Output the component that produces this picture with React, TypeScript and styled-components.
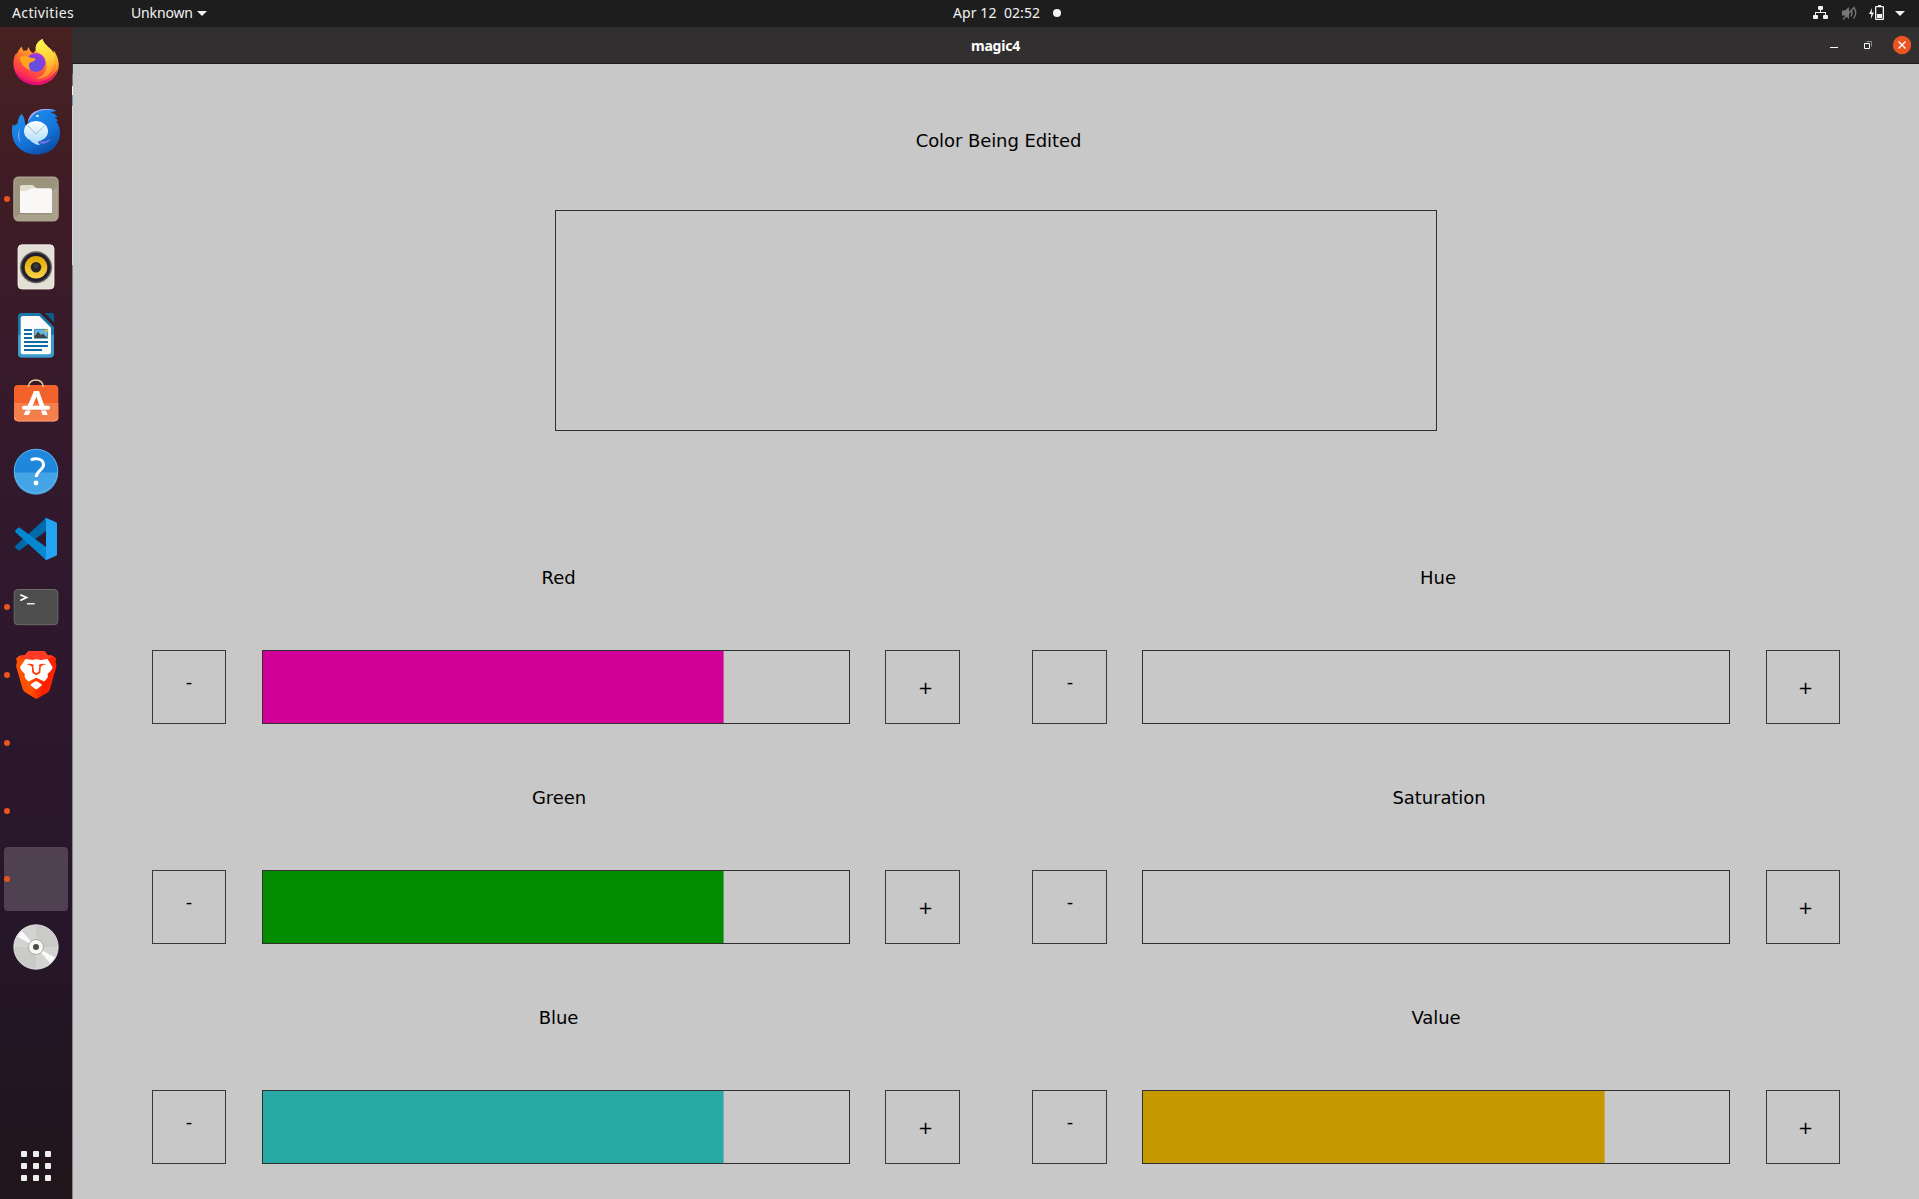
import React from "react";
import styled, { createGlobalStyle } from "styled-components";

const GlobalStyle = createGlobalStyle`
  * { box-sizing: border-box; }
  html, body { margin: 0; padding: 0; overflow: hidden; background: #c8c8c8; }
  svg { display: block; }
`;

const Desktop = styled.div`
  width: 1919px;
  height: 1199px;
  display: flex;
  flex-direction: column;
  font-family: "Noto Sans", "Open Sans", sans-serif;
`;

const TopBar = styled.header`
  flex: none;
  height: 27px;
  background: #1d1d1d;
  color: #f2f2f2;
  display: grid;
  grid-template-columns: 953px 1fr auto;
  font-size: 14px;
  line-height: 26px;
  white-space: pre;
`;

const BarGroup = styled.div`
  display: flex;
  align-items: center;
`;

const MenuGroup = styled(BarGroup)`
  padding-left: 12px;
`;

const BarText = styled.span<{ $w: number; $spacing?: number }>`
  width: ${(p) => p.$w}px;
  height: 27px;
  letter-spacing: ${(p) => p.$spacing ?? 0}px;
`;

const AppMenu = styled.div`
  display: flex;
  align-items: center;
  margin-left: 56px;
`;

const Caret = styled.i`
  width: 0;
  height: 0;
  margin-left: 1px;
  border: 5px solid transparent;
  border-top-color: #f2f2f2;
  border-bottom: 0;
`;

const NoticeDot = styled.i`
  width: 8px;
  height: 8px;
  border-radius: 50%;
  background: #f2f2f2;
  margin: 0 0 1px 12px;
`;

const Tray = styled(BarGroup)`
  padding-right: 14px;
`;

const Body = styled.div`
  flex: 1;
  min-height: 0;
  display: flex;
`;

const Dock = styled.nav`
  flex: none;
  width: 72px;
  padding: 4px 4px 0;
  display: flex;
  flex-direction: column;
  gap: 4px;
  background: linear-gradient(#482121 0%, #401d25 12%, #381a2a 27%, #30182d 45%, #2b172c 62%, #27162a 76%, #231522 88%, #21151b 100%);
`;

const DockItem = styled.div<{ $active?: boolean }>`
  flex: none;
  height: 64px;
  border-radius: 4px;
  display: flex;
  align-items: center;
  background: ${(p) => (p.$active ? "rgba(255,255,255,0.19)" : "transparent")};
`;

const RunningDot = styled.i<{ $on?: boolean }>`
  width: 6px;
  height: 6px;
  margin-right: 2px;
  border-radius: 50%;
  background: ${(p) => (p.$on ? "#e95420" : "transparent")};
`;

const AppsButton = styled.div`
  margin: auto 0 18px 17px;
  display: grid;
  grid-template-columns: repeat(3, 6px);
  gap: 6px;
`;

const AppsDot = styled.i`
  height: 6px;
  border-radius: 1px;
  background: #eeeeec;
`;

const Window = styled.main`
  flex: 1;
  display: flex;
  flex-direction: column;
`;

const TitleBar = styled.div`
  flex: none;
  height: 37px;
  background: #322f30;
  border-bottom: 1px solid #1f1d1d;
  display: grid;
  grid-template-columns: 1fr auto 1fr;
  align-items: center;
  color: #fff;
`;

const WindowTitle = styled.div`
  grid-column: 2;
  font-size: 14px;
  font-weight: 700;
  line-height: 34px;
  padding-top: 2px;
  letter-spacing: -0.2px;
`;

const WindowButtons = styled.div`
  justify-self: end;
  padding-right: 8px;
`;

const Canvas = styled.div`
  flex: 1;
  display: flex;
  flex-direction: column;
  background: #c8c8c8;
  color: #000;
  font-family: "DejaVu Sans", sans-serif;
  font-size: 18px;
  line-height: 24px;
  padding-top: 65px;
  border-style: solid;
  border-width: 0 0 0 1px;
  border-image: linear-gradient(#444 0 11px, #777 11px 23px, #f4f4f4 23px 32px, #5c9cc8 32px 43px, #d8d8d8 43px 202px, #8d838b 202px) 1;
`;

const Label = styled.div<{ $shift?: number }>`
  height: 24px;
  text-align: center;
  letter-spacing: -0.08px;
  padding-left: ${(p) => p.$shift ?? 0}px;
`;

const Preview = styled.div`
  width: 882px;
  height: 221px;
  margin: 57px 0 135px 482px;
  border: 1px solid #303030;
`;

const Columns = styled.div`
  display: grid;
  grid-template-columns: 808px 808px;
  gap: 72px;
  padding-left: 79px;
`;

const Column = styled.section`
  display: flex;
  flex-direction: column;
  gap: 62px;
`;

const Channel = styled.div`
  display: flex;
  flex-direction: column;
  gap: 60px;
`;

const ControlRow = styled.div<{ $right: boolean }>`
  display: grid;
  grid-template-columns: ${(p) => (p.$right ? "75px 35px 588px 36px 74px" : "74px 36px 588px 35px 75px")};
  height: 74px;
`;

const Step = styled.button<{ $plus?: boolean; $nudge: number }>`
  grid-column: ${(p) => (p.$plus ? 5 : 1)};
  display: flex;
  justify-content: center;
  align-items: center;
  border: 1px solid #383838;
  background: none;
  font: inherit;
  color: inherit;
  padding: ${(p) => (p.$plus ? "2px 0 0" : "0 0 10px")};
  padding-left: ${(p) => p.$nudge}px;
`;

const Track = styled.div`
  grid-column: 3;
  border: 1px solid #303030;
`;

const Fill = styled.div<{ $color: string }>`
  height: 100%;
  background: ${(p) => p.$color};
  border-right: 1px solid rgba(200, 200, 200, 0.4);
`;

const Firefox = () => (
  <svg width="48" height="48" viewBox="0 1 48 48">
    <defs>
      <linearGradient id="ffBody" x1="0.8" y1="0" x2="0.3" y2="1">
        <stop offset="0" stopColor="#fff44f" /><stop offset=".3" stopColor="#ffb52b" />
        <stop offset=".58" stopColor="#ff6a2c" /><stop offset=".82" stopColor="#ff3650" /><stop offset="1" stopColor="#e1087a" />
      </linearGradient>
      <linearGradient id="ffTail" x1="0.4" y1="0" x2="0.6" y2="1">
        <stop offset="0" stopColor="#fff44f" /><stop offset=".5" stopColor="#ffd43a" /><stop offset="1" stopColor="#ff8a2a" />
      </linearGradient>
      <radialGradient id="ffGlobe" cx=".45" cy=".7" r=".8">
        <stop offset="0" stopColor="#5b56e0" /><stop offset=".55" stopColor="#8040df" /><stop offset="1" stopColor="#b833e1" />
      </radialGradient>
    </defs>
    <path d="M9.800 8.500c.2 1.800 1 3.300 2 4.400 1-.3 2.200-.4 3.300-.2.2-1.500.9-2.900 1.800-3.700 0 3 2 5 4.300 6.200L24 12c-.8-5 2-9 6.700-11 .6 5 6 7.600 9 11.200.8 1 1.200 1.800 1.700 3l.3-2.700c3.500 4.500 5.500 11 5 16C45.500 39.500 35.500 47 24.500 47 11.500 47 1.400 37.500 1.400 25c0-4 1.300-7.800 3.100-10.400L4.800 17C5.600 13.500 7.300 10.500 9.800 8.500z" fill="url(#ffBody)" />
    <path d="M2 31c4 9 12.500 13 21.500 13S41 39 45.500 31C43 41.500 34 47 24.500 47S5 42 2 31z" fill="#e1097b" opacity=".8" />
    <path d="M24 13c-1.500-5 1.500-10 6.700-12 .6 5 6 7.600 9 11.200 4.500 6 4.500 14-1 21.800-3.500 5-9 7-15 6.500 8-2 12.500-8 10.500-16.500C33 18 28 15 24 13z" fill="url(#ffTail)" />
    <circle cx="23.800" cy="24.500" r="9.600" fill="url(#ffGlobe)" />
    <path d="M7.500 19.500c4-3 8-1.500 10.500.1 2 .8 5 .3 5.500 1.300.2 1.600-2.500 2.500-4.500 3.200-3 1.400-2.500 5.500-.3 8.100C13 31 9 26 7.500 19.500z" fill="#ffa51f" />
  </svg>
);

const Thunderbird = () => (
  <svg width="48" height="48" viewBox="0 0 48 48">
    <defs>
      <linearGradient id="tbBody" x1=".2" y1="0" x2=".8" y2="1">
        <stop offset="0" stopColor="#2192ef" /><stop offset=".6" stopColor="#1373d9" /><stop offset="1" stopColor="#0b479c" />
      </linearGradient>
      <linearGradient id="tbMail" x1="0" y1="0" x2="0" y2="1">
        <stop offset="0" stopColor="#fff" /><stop offset="1" stopColor="#b4dffb" />
      </linearGradient>
    </defs>
    <path d="M9.700 7c-3 2.500-4 6.500-4 9.500C3.800 17.500 1.500 20 .9 16.800-.5 22-.2 27.500 1 31.500 3.800 41 13 47.500 24.500 47.500 38 47.500 48 38.500 48 26c0-5-1.500-8.500-4-11.500l2.200-.3c-.6-1.600-2-3-3.700-3.800l3-.7C43 6.500 40 5.800 38.500 5.500l6-1.800C40 1.600 31 1.500 26.500 3.500 21 5.500 17 9 16 15l-1.500 4c-2.500-3-1-8-4.800-12z" fill="url(#tbBody)" />
    <path d="M16 14.800C17 8 21.500 4 26.500 3.200 31 1.500 39 1.800 44.500 3.700c-6-1-14-1-18.500.8C20 7.500 18.500 11.500 16 14.800z" fill="#b7a0f4" />
    <path d="M8 21C5 26 5.500 32 8.500 36 7 31 7 26 8 21z" fill="#879dee" />
    <ellipse cx="24" cy="24.200" rx="12" ry="10.200" fill="url(#tbMail)" />
    <path d="M17 32c3.500 4 7 6 11 6-1.500-1.500-2-2.500-2-4z" fill="#b9def9" />
    <path d="M27 34.500c5 .5 9-1 11.500-3-1 3.500-6 6.500-11 4.700z" fill="#776fe0" />
    <path d="M15.500 18.500l8.700 8.500L32.700 18.500" fill="none" stroke="#a3bccd" strokeWidth="1" />
    <ellipse cx="25.400" cy="8.900" rx="1.500" ry="1" fill="#eaf5ff" />
  </svg>
);

const Files = () => (
  <svg width="48" height="48" viewBox="0 0 48 48">
    <rect x="1.800" y="2" width="44.400" height="44" rx="4.500" fill="#9c937d" stroke="#c6bfad" strokeWidth=".8" />
    <path d="M2.500 43L45.500 12V41.500q0 4-4 4H6.500q-4 0-4-3z" fill="#aaa28d" />
    <path d="M8 12q0-2 2-2h10c2.500 0 2.500 3 5 3v5H8z" fill="#e2dfd0" />
    <path d="M8 15.500c3 .8 5 .8 7.500 0s3-2.300 5.500-2.300h17q2 0 2 2V36.500q0 2-2 2H10q-2 0-2-2z" fill="#f9f8f7" />
    <path d="M8.700 38.700H39" stroke="#756d59" strokeWidth=".8" />
  </svg>
);

const Rhythmbox = () => (
  <svg width="48" height="48" viewBox="0 0 48 48">
    <defs><linearGradient id="rbCone" x1="0" y1="0" x2="0" y2="1"><stop offset="0" stopColor="#dca500" /><stop offset="1" stopColor="#ffd44a" /></linearGradient></defs>
    <rect x="6" y="1.800" width="36" height="44.200" rx="4" fill="#e4dfd5" stroke="#f6f3eb" strokeWidth=".8" />
    <circle cx="24" cy="24.300" r="16" fill="#66635f" />
    <circle cx="24" cy="24.300" r="14.600" fill="#211f2e" />
    <circle cx="24" cy="24.300" r="11.300" fill="url(#rbCone)" />
    <circle cx="24" cy="24.300" r="5.300" fill="#262626" />
    <circle cx="24" cy="23" r="2.500" fill="#393939" />
  </svg>
);

const Writer = () => (
  <svg width="48" height="48" viewBox="0 0 48 48">
    <path d="M9.500 2H28L42 16v26.500q0 4-4 4H10q-4 0-4-4V6q0-4 3.500-4z" fill="#1778a9" />
    <path d="M6 24H42V42.500q0 4-4 4H10q-4 0-4-4z" fill="#3b9bcb" />
    <path d="M11 5H27.300L39 16.700V41q0 2.300-2.300 2.300H11Q8.700 43.300 8.700 41V7.300Q8.700 5 11 5z" fill="#fbfbfb" />
    <path d="M32.700 2H40q2 0 2 2v7.500z" fill="#0e5b8c" />
    <path d="M12 19h8M12 23h8M12 27h8M12 31h24M12 35h24M12 39h18" stroke="#0f6ca5" strokeWidth="2" />
    <path d="M22.400 18.400h13.200v8.800H22.400z" fill="#67b6dc" stroke="#1778a9" strokeWidth=".8" />
    <path d="M33 18.500h2.600v2.800q-2.600 0-2.600-2.800z" fill="#f9c52c" />
    <path d="M22.500 27v-1.500l3.500-5 3 3.500 2-1.500 4.500 4.500z" fill="#444" />
  </svg>
);

const Software = () => (
  <svg width="48" height="48" viewBox="0 0 48 48">
    <rect x="2" y="6" width="44.300" height="36.300" rx="4" fill="#f3622a" />
    <path d="M2 24H46.300V38.300q0 4-4 4H6q-4 0-4-4z" fill="#f57e4d" />
    <path d="M2.500 38q.5 4 4 4H42q3.500 0 4-4" fill="none" stroke="#fbaa83" strokeWidth=".8" />
    <path d="M16.500 8V7.500C16.500-1.200 31.200-1.200 31.200 7.500V8" fill="none" stroke="#f5d4a0" strokeWidth="1.500" />
    <path d="M22 12h5l8.700 24h-5.200L24.500 17.500 16.800 36H11.700z" fill="#fff" />
    <rect x="10" y="26.800" width="28" height="4" rx="2" fill="#fff" />
    <path d="M13 31.300H35" stroke="#c9754d" strokeWidth=".6" />
  </svg>
);

const Help = () => (
  <svg width="48" height="48" viewBox="0 0 48 48">
    <circle cx="24" cy="24" r="22.200" fill="#1f87dc" />
    <path d="M1.800 25.500H46.200A22.200 22.200 0 0 1 1.800 25.500z" fill="#44a4e6" />
    <circle cx="24" cy="24" r="21.700" fill="none" stroke="#6db8ec" strokeWidth=".8" />
    <path d="M18.700 13c4.500-2.200 12.800-1.800 12.800 4.700 0 5.300-7.300 6.300-7.300 12.300" fill="none" stroke="#fff" strokeWidth="3" />
    <circle cx="24" cy="36" r="2.400" fill="#fff" />
  </svg>
);

const VsCode = () => (
  <svg width="48" height="48" viewBox="0 0 48 48">
    <path d="M34 3v13L7.800 35.200q-.8.700-1.600 0l-2.700-2.500q-1-1 0-2z" fill="#0069aa" />
    <path d="M34 45V32L7.800 12.800q-.8-.7-1.600 0l-2.700 2.500q-1 1 0 2z" fill="#0488d0" />
    <path d="M32 4.500L34.500 3l10 4.500q.5.500.5 1.500v30q0 1-.5 1.500l-10 4.500-2.500-1.500q2 1 2-1.500V6q0-2.500-2-1.500z" fill="#23a4f2" />
  </svg>
);

const Terminal = () => (
  <svg width="48" height="48" viewBox="0 0 48 48">
    <rect x="2.200" y="6.500" width="43.600" height="35.200" rx="3.500" fill="#4d4d4d" stroke="#6b6b6b" />
    <path d="M8.300 11.800l6.200 2.700-6.200 2.900" fill="none" stroke="#fff" strokeWidth="1.700" />
    <path d="M15 20.800h7.700" stroke="#fff" strokeWidth="1.300" />
  </svg>
);

const Brave = () => (
  <svg width="48" height="48" viewBox="0 0 48 48">
    <defs><linearGradient id="braveBody"><stop offset=".35" stopColor="#ff5200" /><stop offset=".65" stopColor="#ff2000" /></linearGradient></defs>
    <path d="M16.500 0h16l3.500 4.500c4-1.200 7 1 8.500 3.500l-1 2.500 1 4.500-6.500 23c-.6 2-1.500 2.800-3 4L24.300 48 13.500 41.500c-1.500-1-2.300-2-3-4L4 15l1-4.500L4 8c1.500-2.700 5-4.500 8.500-3.500z" fill="url(#braveBody)" />
    <path d="M16.500 0h16l3.500 4.500c2-.6 4-.2 5.500 1L37 8H12L7.500 5.500c1.500-1 3-1.300 5-1z" fill="#ff3b25" />
    <path d="M13.500 8l7 1c2.500-1 5.500-1 8 0l7-1 5 8c0 2.500-3 5-5 7 1.500 3-1.300 5.500-3.500 7.500L26 27.500c-1-.7-2.400-.7-3.400 0l-6 3C14.300 28.500 11.500 26 13 23c-2-2-5-4.500-5-7z" fill="#fff" />
    <path d="M14 13.200c3-.9 5.500-.7 8 .8l-.8 1.200.9 5.800 2.200 1 2.200-1 .9-5.800-.8-1.200c2.500-1.500 5-1.700 8-.8-2.600.3-4.700 1-5.700 2.300-.8 2.300.2 4.500-.9 6.700l-3.700 2v2.500l4.500 3.500-1 .8-3.500-2.500-3.500 2.500-1-.8 4.500-3.500v-2.500l-3.700-2c-1.100-2.200-.1-4.400-.9-6.700-1-1.300-3.100-2-5.700-2.300z" fill="#ff3c0c" />
    <path d="M22.200 14.200h4.200l-.4 1.300.6 5-2.300 1.100-2.300-1.100.6-5z" fill="#fff" />
    <path d="M24.200 30c3 1.300 4.500 2.500 6 4-1.500 1.300-4 3.200-6 4.500-2-1.200-4.500-3.200-6-4.500 1.500-1.500 3-2.700 6-4z" fill="#fff" />
  </svg>
);

const Disc = () => (
  <svg width="48" height="48" viewBox="0 0 48 48">
    <circle cx="24" cy="24" r="22.200" fill="#d3d3d2" stroke="#eee" strokeWidth=".8" />
    <path d="M24 24V2.200A21.800 21.800 0 0 1 45.800 24zM24 24V45.800A21.800 21.800 0 0 1 2.200 24z" fill="#cacac9" />
    <path d="M24 24L5 13.500 9.800 8zM24 24l19 10.500L38.200 40z" fill="#fafafa" />
    <circle cx="24" cy="24" r="7.500" fill="#f7f7f6" stroke="#b0aa9c" />
    <circle cx="24" cy="24" r="3" fill="#4b4b4b" />
  </svg>
);

const TrayIcons = () => (
  <svg width="92" height="27" viewBox="1813 0 92 27">
    <g fill="#f2f2f2">
      <rect x="1818" y="6" width="5" height="4" rx="1" />
      <rect x="1813" y="15" width="5" height="4" rx="1" />
      <rect x="1823" y="15" width="5" height="4" rx="1" />
      <path d="M1820 10h1v2h5v3h-1v-2h-9v2h-1v-3h5z" />
      <path d="M1872 8l-3 6h2.300l-.5 5 3.200-6.500h-2.300z" />
      <path d="M1878 5h3v1h2q1 0 1 1v12q0 1-1 1h-7q-1 0-1-1V7q0-1 1-1h2zM1876.300 7.200v11.500h6.400V7.200z" fillRule="evenodd" />
      <path d="M1877 14h5v4h-5z" />
      <path d="M1895 11h10l-5 5z" />
    </g>
    <g fill="none" stroke="#777" strokeWidth="1.300">
      <path d="M1842 10.500h3l4-3.500v12l-4-3.500h-3z" fill="#777" stroke="none" />
      <path d="M1843 19.500L1854.500 7M1851 9.500q2 3.500 0 7M1853.500 7q4.500 6 0 11.500" />
    </g>
  </svg>
);

const WindowControls = () => (
  <svg width="81" height="36" viewBox="1830 27 81 36">
    <path d="M1830 47.500h8" stroke="#fff" />
    <path d="M1866.500 41.500h5v5" fill="none" stroke="#8c8b8b" />
    <path d="M1864.500 43.500h5v5h-5z" fill="none" stroke="#fff" />
    <circle cx="1902" cy="45" r="9.200" fill="#e95420" />
    <path d="M1898.500 41.500l7 7m0-7l-7 7" stroke="#fff" strokeWidth="1.400" />
  </svg>
);

const dockItems: { icon?: React.ReactNode; running?: boolean; active?: boolean }[] = [
  { icon: <Firefox /> },
  { icon: <Thunderbird /> },
  { icon: <Files />, running: true },
  { icon: <Rhythmbox /> },
  { icon: <Writer /> },
  { icon: <Software /> },
  { icon: <Help /> },
  { icon: <VsCode /> },
  { icon: <Terminal />, running: true },
  { icon: <Brave />, running: true },
  { running: true },
  { running: true },
  { running: true, active: true },
  { icon: <Disc /> },
];

interface ChannelInfo {
  name: string;
  color?: string;
  value: number;
  shift: number;
}

const columns: ChannelInfo[][] = [
  [
    { name: "Red", color: "#d10099", value: 461, shift: 5 },
    { name: "Green", color: "#038c00", value: 461, shift: 6 },
    { name: "Blue", color: "#29a9a6", value: 461, shift: 5 },
  ],
  [
    { name: "Hue", value: 0, shift: 4 },
    { name: "Saturation", value: 0, shift: 6 },
    { name: "Value", color: "#c59800", value: 462, shift: 0 },
  ],
];

export default function App() {
  return (
    <Desktop>
      <GlobalStyle />
      <TopBar>
        <MenuGroup>
          <BarText $w={63} $spacing={0.38}>Activities</BarText>
          <AppMenu>
            <BarText $w={65} $spacing={-0.15}>Unknown</BarText>
            <Caret />
          </AppMenu>
        </MenuGroup>
        <BarGroup>
          <BarText $w={88} $spacing={0.08}>{"Apr 12  02:52"}</BarText>
          <NoticeDot />
        </BarGroup>
        <Tray><TrayIcons /></Tray>
      </TopBar>
      <Body>
        <Dock>
          {dockItems.map((item, i) => (
            <DockItem key={i} $active={item.active}>
              <RunningDot $on={item.running} />
              {item.icon}
            </DockItem>
          ))}
          <AppsButton>
            {Array.from({ length: 9 }, (_, i) => <AppsDot key={i} />)}
          </AppsButton>
        </Dock>
        <Window>
          <TitleBar>
            <WindowTitle>magic4</WindowTitle>
            <WindowButtons><WindowControls /></WindowButtons>
          </TitleBar>
          <Canvas>
            <Label $shift={5}>Color Being Edited</Label>
            <Preview />
            <Columns>
              {columns.map((channels, c) => (
                <Column key={c}>
                  {channels.map((ch) => (
                    <Channel key={ch.name}>
                      <Label $shift={ch.shift}>{ch.name}</Label>
                      <ControlRow $right={c === 1}>
                        <Step $nudge={c}>-</Step>
                        <Track>
                          {ch.color && <Fill $color={ch.color} style={{ width: ch.value }} />}
                        </Track>
                        <Step $plus $nudge={6 - c}>+</Step>
                      </ControlRow>
                    </Channel>
                  ))}
                </Column>
              ))}
            </Columns>
          </Canvas>
        </Window>
      </Body>
    </Desktop>
  );
}
